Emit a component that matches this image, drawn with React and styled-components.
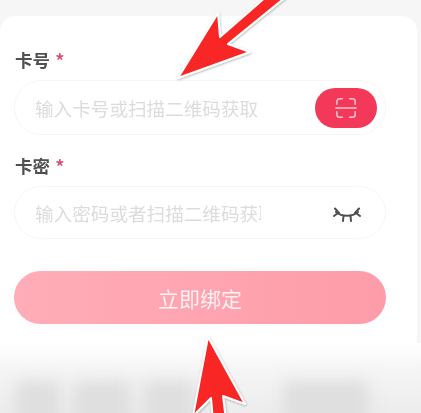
import styled, { createGlobalStyle } from "styled-components";

const GlobalStyle = createGlobalStyle`
    html, body {
        margin: 0;
        padding: 0;
        background-color: #f6f6f6;
    }
`;

const Page = styled.div`
    position: relative;
    width: 421px;
    height: 413px;
    overflow: hidden;
    padding-top: 16px;
    box-sizing: border-box;
    background-color: #f6f6f6;
    font-family: "Noto Sans CJK SC", "Noto Sans", sans-serif;
`;
const Card = styled.div`
    width: 417px;
    height: 397px;
    box-sizing: border-box;
    padding: 33px 31px 0 14px;
    background-color: #ffffff;
    border-radius: 15px 15px 0 0;
    display: flex;
    flex-direction: column;
    filter: blur(0.5px);
`;
const Label = styled.div`
    height: 22px;
    margin: 0 0 9px 1px;
    font-size: 17.5px;
    line-height: 22px;
    font-weight: 700;
    color: #505050;
`;
const Star = styled.span`
    margin-left: 5px;
    font-size: 20px;
    font-weight: 500;
    vertical-align: -2px;
    color: #dd4a70;
`;
const Field = styled.div`
    height: ${props => props.height}px;
    margin-bottom: ${props => props.gap}px;
    box-sizing: border-box;
    padding: 0 8px 0 20px;
    display: flex;
    align-items: center;
    justify-content: space-between;
    border: 1px solid #f6f6f6;
    border-radius: 27px;
    background-color: #ffffff;
`;
const Input = styled.input`
    width: 226px;
    padding: 0;
    border: none;
    outline: none;
    background: transparent;
    font-family: inherit;
    font-size: 18.6px;
    color: #333333;

    &::placeholder {
        color: #dcdcdc;
        opacity: 1;
    }
`;
const ScanButton = styled.button`
    width: 62px;
    height: 40px;
    padding: 0;
    border: none;
    border-radius: 20px;
    background-color: #f33859;
    display: flex;
    align-items: center;
    justify-content: center;
`;
const EyeButton = styled.button`
    width: 62px;
    height: 40px;
    padding: 4px 0 0 2px;
    border: none;
    background: transparent;
    display: flex;
    align-items: center;
    justify-content: center;
`;
const Submit = styled.button`
    height: 53px;
    margin-top: -1px;
    padding: 0;
    border: none;
    border-radius: 27px;
    background: linear-gradient(90deg, #ffadb8, #fe9ca9);
    color: #fff2f4;
    font-family: inherit;
    font-size: 21px;
`;
const Footer = styled.div`
    position: absolute;
    left: 0;
    right: 0;
    bottom: 0;
    height: 70px;
    padding: 38px 40px 0 16px;
    box-sizing: border-box;
    display: flex;
    gap: 14px;
    background: linear-gradient(180deg, #ffffff 0%, #f5f5f5 40%, #ececec 100%);
`;
const BlurBlock = styled.div`
    width: ${props => props.width}px;
    margin-left: ${props => props.offset || 0}px;
    height: 44px;
    background-color: #dedede;
    filter: blur(8px);
`;
const ArrowLayer = styled.svg`
    position: absolute;
    top: 0;
    left: 0;
    pointer-events: none;
`;

function ScanIcon() {
    return (
        <svg width="22" height="22" viewBox="0 0 24 24" fill="none" stroke="#ffc4ce" strokeWidth="1.7" strokeLinecap="round">
            <path d="M2 8V5a3 3 0 0 1 3-3h3" />
            <path d="M16 2h3a3 3 0 0 1 3 3v3" />
            <path d="M2 16v3a3 3 0 0 0 3 3h3" />
            <path d="M16 22h3a3 3 0 0 0 3-3v-3" />
            <path d="M1 12h22" />
        </svg>
    );
}

function EyeIcon() {
    return (
        <svg width="28" height="16" viewBox="0 0 28 16" fill="none" stroke="#4f4f4f" strokeWidth="2" strokeLinecap="round">
            <path d="M3 5c6 5 16 5 22 0" />
            <path d="M2 1.5 6 6M1 9l4-3" />
            <path d="M26 1.5 22 6M27 9l-4-3" />
            <path d="M10.5 9 10 14M17.5 9 18 14" />
        </svg>
    );
}

function Arrows() {
    return (
        <ArrowLayer width="421" height="413" viewBox="0 0 421 413">
            <defs>
                <filter id="arrowShadow" x="-20%" y="-20%" width="140%" height="140%">
                    <feDropShadow dx="0.5" dy="1" stdDeviation="1" floodColor="#000000" floodOpacity="0.3" />
                </filter>
            </defs>
            <g fill="#f92626" stroke="#ffffff" strokeWidth="2" strokeLinejoin="round" filter="url(#arrowShadow)">
                <path d="M178 78 218 13 220 37 267 -4 287 -4 228 44 250 52Z" />
                <path d="M208 337 193 416 211 398 213 420 226 420 223 396 245 404Z" />
            </g>
        </ArrowLayer>
    );
}

export default function App() {
    return (
        <Page>
            <GlobalStyle />
            <Card>
                <Label>卡号<Star>*</Star></Label>
                <Field height={55} gap={20}>
                    <Input placeholder="输入卡号或扫描二维码获取" />
                    <ScanButton><ScanIcon /></ScanButton>
                </Field>
                <Label>卡密<Star>*</Star></Label>
                <Field height={53} gap={33}>
                    <Input placeholder="输入密码或者扫描二维码获取" />
                    <EyeButton><EyeIcon /></EyeButton>
                </Field>
                <Submit>立即绑定</Submit>
            </Card>
            <Footer>
                <BlurBlock width={44} />
                <BlurBlock width={56} />
                <BlurBlock width={50} />
                <BlurBlock width={84} offset={76} />
            </Footer>
            <Arrows />
        </Page>
    );
}
